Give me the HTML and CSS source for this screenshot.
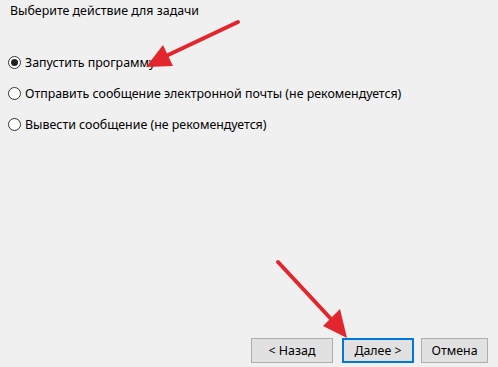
FILE: index.html
```html
<!DOCTYPE html>
<html>
<head>
  <meta charset="UTF-8">
  <title>Мастер создания задачи</title>
  <link rel="stylesheet" href="styles.css">
</head>
<body>
  <div class="page">
    <h2 class="title">Выберите действие для задачи</h2>

    <div class="options">
      <label class="option">
        <span class="radio checked"></span>
        <span>Запустить программу</span>
      </label>
      <label class="option">
        <span class="radio"></span>
        <span>Отправить сообщение электронной почты (не рекомендуется)</span>
      </label>
      <label class="option">
        <span class="radio"></span>
        <span>Вывести сообщение (не рекомендуется)</span>
      </label>
    </div>

    <div class="buttons">
      <button class="btn back">&lt; Назад</button>
      <button class="btn next">Далее &gt;</button>
      <button class="btn cancel">Отмена</button>
    </div>
  </div>

  <!-- стрелки поверх скриншота -->
  <svg class="arrows" width="498" height="367" viewBox="0 0 498 367">
    <line x1="238" y1="22" x2="166" y2="56" stroke="#e3262d" stroke-width="4" stroke-linecap="round"/>
    <polygon points="146,67 163,45 173,66" fill="#e3262d"/>
    <line x1="278" y1="262" x2="332" y2="320" stroke="#e3262d" stroke-width="4" stroke-linecap="round"/>
    <polygon points="347,338 323,326 340,309" fill="#e3262d"/>
  </svg>
</body>
</html>
```

FILE: styles.css
```css
body {
  margin: 0;
  background-color: #f0f0f0;
  font-family: "Noto Sans", "Open Sans", sans-serif;
  font-size: 12.4px;
  color: #000;
}

.page {
  height: 367px;
  display: flex;
  flex-direction: column;
  position: relative;
}

.title {
  font-size: 12.4px;
  font-weight: normal;
  margin: 2px 0 0 10px;
}

.options {
  display: flex;
  flex-direction: column;
  gap: 15px;
  margin: 35px 0 0 8px;
}

.option {
  display: flex;
  align-items: center;
  gap: 4px;
  height: 16px;
}

.radio {
  width: 11px;
  height: 11px;
  border: 1px solid #333;
  border-radius: 50%;
  background: #fff;
  display: flex;
  justify-content: center;
  align-items: center;
}

.radio.checked::after {
  content: "";
  width: 7px;
  height: 7px;
  border-radius: 50%;
  background: #222;
}

.buttons {
  margin-top: auto;
  display: flex;
  justify-content: flex-end;
  padding: 0 10px 4px 0;
}

.btn {
  font-family: inherit;
  font-size: 12.4px;
  height: 25px;
  background-color: #e1e1e1;
  border: 1px solid #adadad;
  padding: 0;
}

.back {
  width: 82px;
}

.next {
  width: 72px;
  margin-left: 9px;
  border: 2px solid #0078d7;
}

.cancel {
  width: 67px;
  margin-left: 7px;
}

.arrows {
  position: absolute;
  left: 0;
  top: 0;
  pointer-events: none;
}
```
